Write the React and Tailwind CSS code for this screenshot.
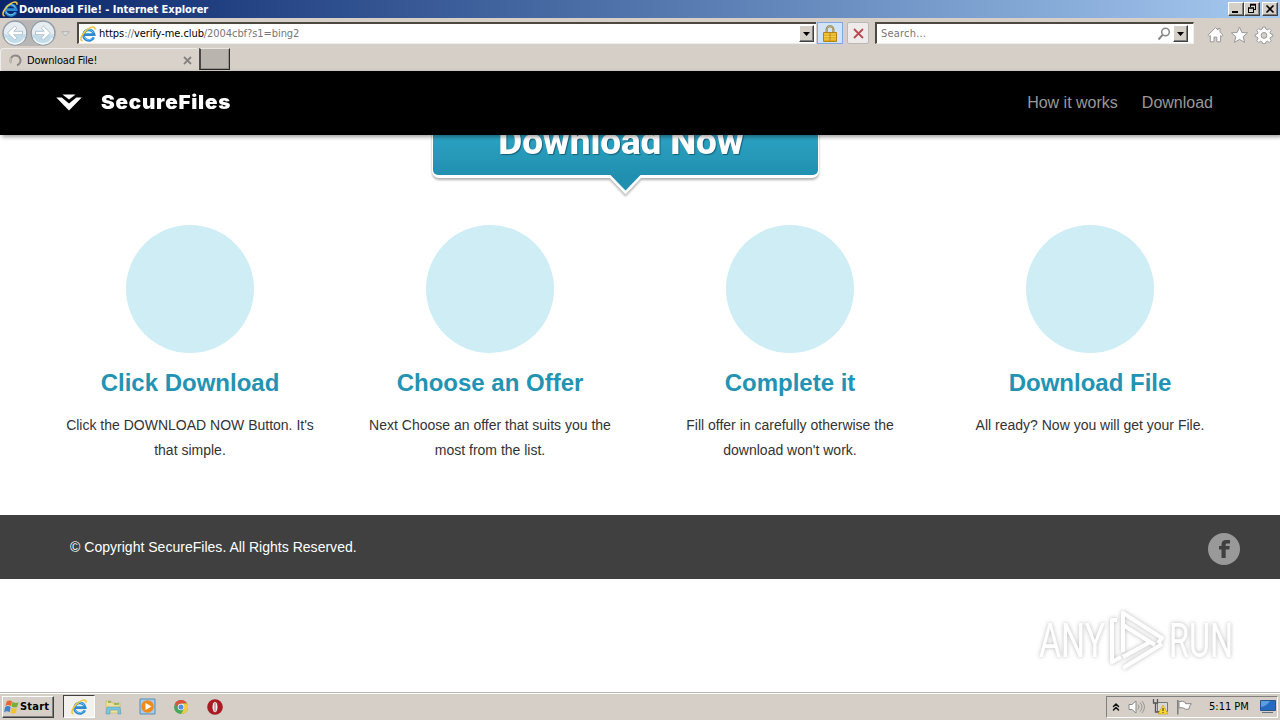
import { ChevronsUp } from 'lucide-react';

const STEPS = [
  { title: 'Click Download', lines: ["Click the DOWNLOAD NOW Button. It's", 'that simple.'] },
  { title: 'Choose an Offer', lines: ['Next Choose an offer that suits you the', 'most from the list.'] },
  { title: 'Complete it', lines: ['Fill offer in carefully otherwise the', "download won't work."] },
  { title: 'Download File', lines: ['All ready? Now you will get your File.'] },
];

function IeIcon({ size = 16 }) {
  return (
    <svg width={size} height={size} viewBox="0 0 16 16" fill="none" className="shrink-0">
      <path d="M13.8 11.2A5.4 5.3 0 1 1 14.2 8.6H4.5" stroke="#2b8ad2" strokeWidth="2.7" />
      <path d="M13.2 11.2A5.2 5.2 0 0 1 3.8 10.5M4 7.6a4.9 4.9 0 0 1 9.4-1" stroke="#7accf3" strokeWidth=".9" />
      <path d="M2.6 15C-1.3 14.3 2.3 6.4 8.6 2.6c3.8-2.2 7.2-2.2 6.2 1.2" stroke="#f0c93c" strokeWidth="1.6" />
    </svg>
  );
}

function NavArrow({ flip }) {
  return (
    <svg width="26" height="26" viewBox="0 0 26 26">
      <circle cx="13" cy="13" r="11.8" fill="#e6edf2" stroke="#8e99a4" strokeWidth="1.2" />
      <path d="M2.3 14a10.7 10.7 0 0 0 21.4 0q-10.7 3-21.4 0" fill="#c3dcea" />
      <path d="M3.5 18a10.7 10.7 0 0 0 19 0" fill="none" stroke="#f2f9fc" strokeWidth="1.5" />
      <path
        d="M5.5 13l7.2-7 2.2 2.2-3.1 3.1h8.7v3.4h-8.7l3.1 3.1-2.2 2.2z"
        fill="#fff"
        stroke="#a3b5c4"
        strokeWidth=".8"
        transform={flip ? 'rotate(180 13 13)' : undefined}
      />
    </svg>
  );
}

function DropButton() {
  return (
    <div className="flex h-[17px] w-[15px] items-center justify-center border border-t-white border-l-white border-r-[#404040] border-b-[#404040] bg-[#d4d0c8] shadow-[inset_-1px_-1px_0_#808080]">
      <svg width="7" height="4" viewBox="0 0 7 4"><path d="M0 0h7L3.5 4z" /></svg>
    </div>
  );
}

function WindowButton({ children }) {
  return (
    <div className="h-[14px] w-4 border border-t-white border-l-white border-r-[#404040] border-b-[#404040] bg-[#d4d0c8] shadow-[inset_-1px_-1px_0_#808080]">
      <svg width="14" height="12" viewBox="0 0 14 12" fill="none" stroke="#000">{children}</svg>
    </div>
  );
}

function TitleBar() {
  return (
    <div className="flex h-[18px] items-center bg-linear-to-r from-[#0a246a] to-[#a6caf0] pr-[2px] pl-[2px]">
      <IeIcon size={16} />
      <span className="ml-px text-[11px] font-bold tracking-[-0.03px] whitespace-nowrap text-white">
        Download File! - Internet Explorer
      </span>
      <div className="ml-auto flex">
        <WindowButton><path d="M3 9h6" strokeWidth="2" /></WindowButton>
        <WindowButton>
          <path d="M5 2h6M10.5 2v5M8 6.5h3M5.5 2v2M3.5 5v5M8.5 5v5M3 9.5h6" />
          <path d="M5 1.5h6M3 5h6" strokeWidth="1.6" />
        </WindowButton>
        <div className="ml-[2px]">
          <WindowButton><path d="M3.5 2.5l7 7M10.5 2.5l-7 7" strokeWidth="1.6" /></WindowButton>
        </div>
      </div>
    </div>
  );
}

function Toolbar() {
  return (
    <div className="flex h-[30px] items-start bg-[#d5cfc8] pl-[2px]">
      <div className="mt-[2px] flex gap-[2px] rounded-full bg-[#b8b7b5]">
        <NavArrow />
        <NavArrow flip />
      </div>
      <svg width="9" height="6" viewBox="0 0 9 6" className="mt-[13px] ml-[5px]">
        <path d="M.7.7h7.6L4.5 5z" fill="#dedede" stroke="#aaa" strokeWidth=".8" />
      </svg>
      <div className="mt-1 ml-[7px] flex h-[22px] w-[739px] items-center border-t-2 border-l-2 border-t-[#4e4940] border-l-[#4e4940] border-b border-b-[#f0eeea] bg-white pl-px">
        <IeIcon size={16} />
        <span className="ml-[3px] text-[11px] tracking-[-0.07px] whitespace-nowrap text-[#777]">
          <span className="text-black">https</span>://<span className="text-black">verify-me.club</span>/2004cbf?s1=bing2
        </span>
        <div className="mr-[2px] ml-auto"><DropButton /></div>
      </div>
      <div className="mt-1 ml-px flex h-[22px] w-[26px] items-center justify-center border border-[#7fa9e4] bg-[#cfe3fb]">
        <svg width="14" height="17" viewBox="0 0 14 17" fill="none">
          <path d="M3.6 8V4.6a3.4 3.4 0 0 1 6.8 0V8" stroke="#8d783a" strokeWidth="2" />
          <path d="M3.6 8V4.6a3.4 3.4 0 0 1 6.8 0V8" stroke="#e2d8a8" strokeWidth=".6" />
          <path d="M.5 7.5h13v9H.5z" fill="#e3ac1c" stroke="#b38414" />
          <path d="M1 9h12M1 11.5h12M1 14h12" stroke="#f6d45c" strokeWidth=".9" />
          <path d="M7 8v8" stroke="#b08324" strokeWidth=".9" />
        </svg>
      </div>
      <div className="mt-1 ml-1 flex h-[22px] w-[22px] items-center justify-center rounded-[2px] border border-[#bab8b6] bg-[#eeebea]">
        <svg width="11" height="11" viewBox="0 0 11 11" fill="none">
          <path d="M1 1l9 9M10 1L1 10" stroke="#b84c52" strokeWidth="1.8" />
        </svg>
      </div>
      <div className="mt-1 ml-[6px] flex h-[22px] w-[319px] items-center border-t-2 border-r border-l-2 border-t-[#4e4940] border-r-[#f0eeea] border-l-[#4e4940] border-b border-b-[#f0eeea] bg-white pl-1">
        <span className="text-[11px] tracking-[0.2px] text-[#777]">Search...</span>
        <svg width="14" height="14" viewBox="0 0 14 14" fill="none" className="ml-auto">
          <circle cx="8.5" cy="5" r="3.8" stroke="#888" strokeWidth="1.5" />
          <path d="M5.6 7.9L1.5 12.5" stroke="#888" strokeWidth="2" />
        </svg>
        <div className="mr-[5px] ml-[2px]"><DropButton /></div>
      </div>
      <svg width="67" height="18" viewBox="0 0 67 18" fill="#fff" stroke="#999" className="mt-2 ml-[13px]">
        <path d="M1 9.2L8.5 1.5l2.5 2.6V2.4h2v3.8l3 3-1.2 1.3-1.2-1v6.3h-3.8v-4.7H7v4.7H3.3V9.5l-1.1 1z" />
        <path d="M32.5 1l2.3 5.4 5.8.5-4.4 3.8 1.4 5.7-5.1-3-5.1 3 1.4-5.7-4.4-3.8 5.8-.5z" />
        <path d="M55.7 1h2.6l.5 2.1 1.6.7 1.9-1.2 1.9 1.9L63 6.4l.7 1.6 2.1.5v2l-2.1.6-.7 1.6 1.2 1.9-1.9 1.9-1.9-1.2-1.6.7-.5 1.7h-2.6l-.5-1.7-1.6-.7-1.9 1.2-1.9-1.9 1.2-1.9-.7-1.6-2.1-.6v-2l2.1-.5.7-1.6-1.2-1.9 1.9-1.9 1.9 1.2 1.6-.7z" />
        <circle cx="57" cy="9.4" r="2.9" fill="#d5cfc8" />
      </svg>
    </div>
  );
}

function TabStrip() {
  return (
    <div className="flex h-[23px] bg-[#d5cfc8]">
      <div className="flex w-[199px] items-center rounded-t-sm border-t border-l border-white/60 bg-[#d8d2cb] pl-2">
        <svg width="13" height="13" viewBox="0 0 13 13" fill="none">
          <path d="M2.2 9A5 5 0 1 1 8 11.2" stroke="#8b8987" strokeWidth="2" />
          <path d="M2.2 9A5 5 0 0 1 2 4" stroke="#bcb8b3" strokeWidth="2" />
        </svg>
        <span className="ml-[5px] text-[11px] tracking-[-0.18px] text-black">Download File!</span>
        <svg width="9" height="9" viewBox="0 0 9 9" className="mr-[7px] ml-auto">
          <path d="M1 1l7 7M8 1L1 8" stroke="#858280" strokeWidth="1.8" />
        </svg>
      </div>
      <div className="h-[22px] w-[31px] border-t border-r border-b border-l-2 border-t-[#e9e6e2] border-r-[#2a2825] border-b-[#2a2825] border-l-[#4a4744] bg-[#bab4af] shadow-[inset_-1px_-1px_0_#97928d]" />
    </div>
  );
}

function SiteHeader() {
  return (
    <header className="relative z-10 flex h-16 items-center bg-black pr-[67px] pl-14 shadow-[2px_2px_4px_rgba(0,0,0,0.38)]">
      <svg width="26" height="17" viewBox="0 0 27 18" fill="#fff" className="-mt-[2px]">
        <path d="M6.5 .5h14l-7 5.3z" />
        <path d="M0 3.8h5.8l7.7 6.2 7.7-6.2H27L13.5 17.5z" />
      </svg>
      <span className="-mt-px ml-[19px] origin-left scale-x-[1.085] font-['Inter'] text-[19px] font-black tracking-[0.7px] text-white">
        SecureFiles
      </span>
      <nav className="ml-auto flex gap-6 font-['Liberation_Sans'] text-base text-[#999]">
        <span>How it works</span>
        <span>Download</span>
      </nav>
    </header>
  );
}

function DownloadButton() {
  return (
    <div className="-mt-10 ml-[430px] h-[108px] w-[391px] drop-shadow-[0_2px_1px_rgba(0,0,0,0.3)]">
      {/* the white rim shows only along the bottom edge */}
      <div className="mx-[2px] h-[83px] rounded-b-[7px] border-x border-b-[3px] border-white bg-white text-center">
        <div className="h-20 rounded-b-[5px] bg-linear-to-b from-[#36b4d4] to-[#2190b0] pt-[27px] pr-[9px] font-['Roboto'] text-[37px] leading-[40px] font-extrabold tracking-[-0.15px] text-white [text-shadow:1px_1px_1px_#176078]">
          Download Now
        </div>
      </div>
      <svg width="40" height="22" viewBox="0 0 40 22" className="relative -top-[4px] left-[175px]">
        <path d="M2 1L20.5 20.5 39 1" fill="#fff" />
        <path d="M4.5 0L20.5 16.5 36.5 0z" fill="#2190b0" />
      </svg>
    </div>
  );
}

function Step({ title, lines }) {
  return (
    <div className="flex w-[300px] flex-col items-center text-center">
      <div className="size-32 rounded-full bg-[#ceedf5]" />
      <h3 className="mt-[14px] text-2xl leading-8 font-bold text-[#2293b2]">{title}</h3>
      <p className="mt-[14px] text-sm leading-[25px] text-[#333]">
        {lines.map((line) => <span key={line} className="block whitespace-nowrap">{line}</span>)}
      </p>
    </div>
  );
}

function Watermark() {
  return (
    <div className="flex h-16 w-[198px] items-center font-['Roboto'] text-[49px] text-white drop-shadow-[0_0_2px_rgba(0,0,0,0.28)]">
      <span className="w-[66px] origin-left scale-x-[0.69]">ANY</span>
      <svg width="60" height="64" viewBox="0 0 60 64" fill="none" stroke="#fff" strokeWidth="4" strokeLinejoin="round">
        <path d="M18 44V5l39 25-4 5M18 17l32 20" />
        <path d="M12 12H7v42l9-5M18 60l39-24M18 49l27-15" />
      </svg>
      <span className="ml-1 w-[66px] origin-left scale-x-[0.66]">RUN</span>
    </div>
  );
}

function SiteFooter() {
  return (
    <footer className="flex h-16 items-center justify-between bg-[#404040] pr-10 pl-[70px] text-sm text-white">
      <span className="tracking-[0.02px]">© Copyright SecureFiles. All Rights Reserved.</span>
      <svg width="32" height="32" viewBox="0 0 32 32" className="mt-1">
        <circle cx="16" cy="16" r="16" fill="#999" />
        <path d="M13.5 25v-8.5H11V13h2.5v-1.5c0-3 1.5-4.5 4.5-4.5h4v3.6h-2.3c-1.5 0-2 .4-2 1.4v1h4.1l-.5 3.5h-3.6V25z" fill="#404040" />
      </svg>
    </footer>
  );
}

function Taskbar() {
  return (
    <div className="flex h-7 items-center border-t border-[#bbb7b1] bg-[#d5cfc8] shadow-[inset_0_1px_0_#fff]">
      <div className="ml-[2px] flex h-[22px] w-[52px] items-center border border-t-white border-l-white border-r-[#404040] border-b-[#404040] pl-px shadow-[inset_-1px_-1px_0_#808080]">
        <svg width="16" height="16" viewBox="0 0 17 16">
          <path d="M3 2q3-2 5.5 0L7.3 7Q4 5 1.5 7z" fill="#e6672d" />
          <path d="M9 2.5q3 2 6.5 .5L14 8Q11 9 8 7.5z" fill="#79ae3c" />
          <path d="M1.3 8Q4 6 7 8l-1 5.5q-3-2-6 0z" fill="#3d82cb" />
          <path d="M7.8 8.5q3 2 6 .5L12.5 14.5q-3 1.5-5.5-.5z" fill="#f3c233" />
        </svg>
        <span className="text-[11px] font-bold tracking-[0.2px] text-black">Start</span>
      </div>
      <div className="ml-[9px] flex h-[23px] w-8 items-center justify-center border border-t-[#404040] border-l-[#404040] border-r-white border-b-white bg-[#f3f1ee]">
        <IeIcon size={16} />
      </div>
      <svg width="17" height="17" viewBox="0 0 17 17" className="ml-[10px]">
        <path d="M1 3h5l1 2h8v10H1z" fill="#efdf97" stroke="#d3bd6d" strokeWidth=".8" />
        <path d="M3 4h3M9 6h5" stroke="#78af52" strokeWidth="1.4" />
        <path d="M2 9h13l1 7h-3v-4H5v4H1z" fill="#79c4df" stroke="#579eb9" strokeWidth=".6" />
      </svg>
      <svg width="17" height="17" viewBox="0 0 17 17" className="ml-[17px]">
        <path d="M1 1h15v15H1z" fill="#a5cce9" stroke="#568db8" />
        <circle cx="8.5" cy="8.5" r="6.2" fill="#ef8b1d" />
        <path d="M6.5 5l6 3.5-6 3.5z" fill="#fff" />
      </svg>
      <svg width="14" height="14" viewBox="0 0 16 16" className="ml-[18px]">
        <circle cx="8" cy="8" r="8" fill="#48a85a" />
        <path d="M1 4a8 8 0 0 1 14 0H8z" fill="#de4e3e" />
        <path d="M15 4a8 8 0 0 1-7 12l3.5-6L8 4z" fill="#f5c83f" />
        <path d="M1 4l4 6 3-6z" fill="#de4e3e" />
        <circle cx="8" cy="8" r="3.7" fill="#fff" />
        <circle cx="8" cy="8" r="2.9" fill="#4f8ee5" />
      </svg>
      <svg width="16" height="16" viewBox="0 0 16 16" className="ml-[19px]">
        <circle cx="8" cy="8" r="7.8" fill="#a91b22" />
        <ellipse cx="8" cy="8" rx="2.5" ry="5.3" fill="#eee" />
        <path d="M8 3.5v9" stroke="#9a3335" strokeWidth=".7" />
      </svg>
      <div className="mr-[2px] ml-auto flex h-[22px] w-[172px] items-center border border-t-[#808080] border-l-[#808080] border-r-white border-b-white pl-[3px]">
        <ChevronsUp size={12} strokeWidth={3} color="#111" />
        <svg width="17" height="16" viewBox="0 0 17 16" fill="none" stroke="#888" className="ml-[6px]">
          <path d="M1 5.5h3L8 2v12l-4-3.5H1z" fill="#fff" />
          <path d="M10 5.5q2 2.5 0 5M12 3.5q4 4.5 0 9M14 2q5 6 0 12" strokeWidth=".8" />
        </svg>
        <svg width="17" height="17" viewBox="0 0 17 17" className="ml-[7px]">
          <path d="M5.5 4.5h10v9h-10z" fill="#d8d8d8" stroke="#777" />
          <path d="M1.5 1v4h4V1M3.5 5v9h5" fill="none" stroke="#555" strokeWidth="1.3" />
          <path d="M11 7l5 9H6z" fill="#f9d82d" stroke="#c69b1c" strokeWidth=".6" />
          <path d="M11 10v3M11 14v1" stroke="#333" />
        </svg>
        <svg width="17" height="16" viewBox="0 0 17 16" className="ml-[7px]">
          <path d="M3 2.5q4-1 6.5 1v1.2h5.8q-2 2.2-2.5 5.5Q9 11 7.3 9 5 8.3 3 9z" fill="#fff" stroke="#888" />
          <path d="M1.8 1v14.5" stroke="#777" strokeWidth="1.4" />
        </svg>
        <span className="ml-4 text-[11px] whitespace-nowrap text-black">5:11 PM</span>
        <svg width="16" height="14" viewBox="0 0 16 14" className="mr-px ml-auto">
          <path d="M.5.5h15v10H.5z" fill="#246cc2" stroke="#26548d" />
          <path d="M1 7q6-1 9-6H1z" fill="#5b9de0" />
          <path d="M2 12.5h11" stroke="#65717d" />
        </svg>
      </div>
    </div>
  );
}

export default function App() {
  return (
    <div className="flex h-[720px] w-[1280px] flex-col overflow-hidden bg-white font-['DejaVu_Sans_Condensed','DejaVu_Sans',sans-serif] leading-none">
      <TitleBar />
      <Toolbar />
      <TabStrip />
      <SiteHeader />
      <main className="flex h-[557px] flex-col font-['Liberation_Sans',Arial,sans-serif]">
        <section className="h-[380px]">
          <DownloadButton />
          <div className="mt-[22px] ml-10 flex">
            {STEPS.map((step) => <Step key={step.title} {...step} />)}
          </div>
        </section>
        <SiteFooter />
        <div className="mt-[29px] ml-[1039px]"><Watermark /></div>
      </main>
      <Taskbar />
    </div>
  );
}
